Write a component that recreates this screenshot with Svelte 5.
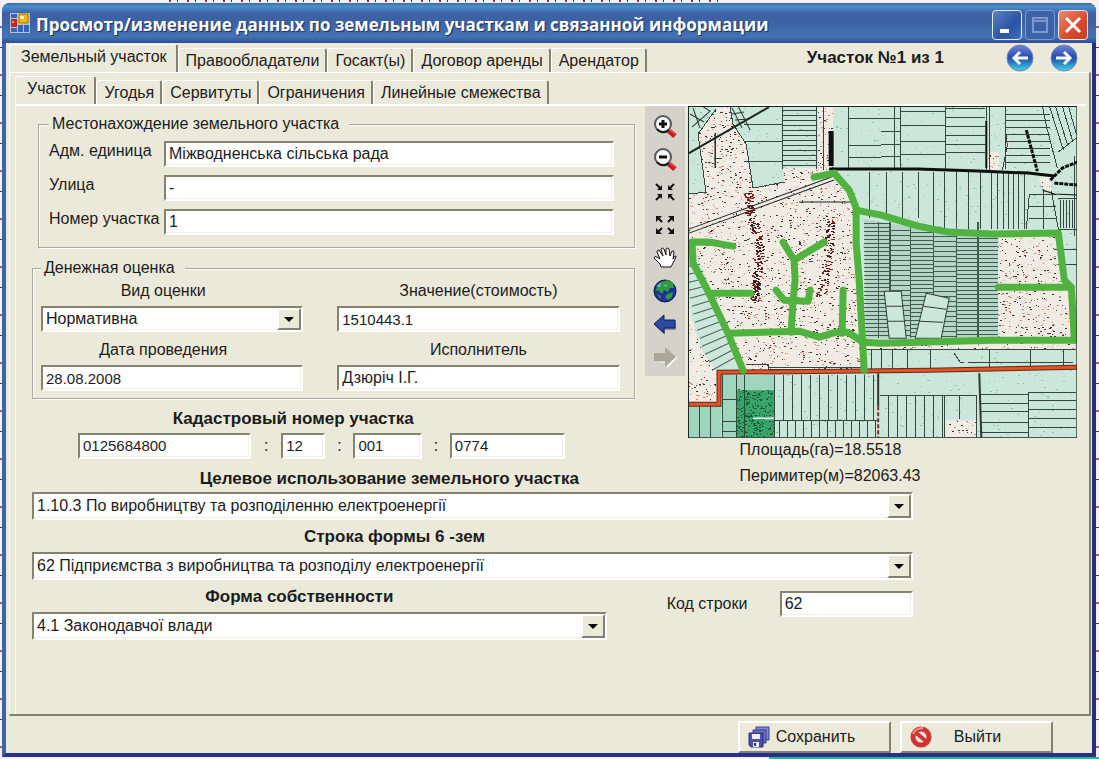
<script lang="ts">
  const mainTabs = ['Земельный участок', 'Правообладатели', 'Госакт(ы)', 'Договор аренды', 'Арендатор'];
  const subTabs = ['Участок', 'Угодья', 'Сервитуты', 'Ограничения', 'Линейные смежества'];

  let mainTab = $state(0);
  let subTab = $state(0);

  let parcel = $state({
    unit: 'Міжводненська сільська рада',
    street: '-',
    number: '1',
    valueKind: 'Нормативна',
    value: '1510443.1',
    date: '28.08.2008',
    author: 'Дзюріч І.Г.',
    cadastre: ['0125684800', '12', '001', '0774'],
    purpose: '1.10.3 По виробництву та розподіленню електроенергії',
    formRow: '62 Підприємства з виробництва та розподілу електроенергії',
    ownership: '4.1 Законодавчої влади',
    rowCode: '62'
  });

  const tools = ['zoom-in', 'zoom-out', 'shrink', 'expand', 'pan', 'globe', 'back', 'forward'];
  const toolNames = ['Приблизить', 'Отдалить', 'Сжать', 'Развернуть', 'Сдвинуть', 'Вся карта', 'Назад', 'Вперёд'];

  // Small seeded generator, so the map is the same on every load
  let seed = 7;
  const rnd = () => {
    seed = (seed * 16807) % 2147483647;
    return seed / 2147483647;
  };

  const specks = (count: number, x: number, y: number, w: number, h: number, len = 1) => {
    let d = '';
    for (let i = 0; i < count; i++) {
      d += `M${Math.floor(x + rnd() * w)} ${Math.floor(y + rnd() * h)}h${1 + Math.floor(rnd() * len)}`;
    }
    return d;
  };

  const streak = (points: number[][], count: number, spread: number) => {
    let d = '';
    for (let i = 0; i < count; i++) {
      const t = rnd() * (points.length - 1);
      const [a, b] = [points[Math.floor(t)], points[Math.floor(t) + 1]];
      const f = t % 1;
      const x = a[0] + (b[0] - a[0]) * f + (rnd() - 0.5) * spread;
      d += `M${Math.round(x)} ${Math.round(a[1] + (b[1] - a[1]) * f)}h2`;
    }
    return d;
  };

  const verticals = (xs: number[], y1: number, y2: number) => xs.map((x) => `M${x} ${y1}V${y2}`).join('');
  const horizontals = (ys: number[], x1: number, x2: number) => ys.map((y) => `M${x1} ${y}H${x2}`).join('');
  const steps = (from: number, to: number, step: number) => {
    const out: number[] = [];
    for (let v = from; v <= to; v += step) out.push(v);
    return out;
  };

  const parcels = [
    verticals([94, 128, 135, 160, 206, 212, 257, 317], 0, 63),
    horizontals([18, 35, 55], 56, 94),
    horizontals(steps(4, 60, 5), 94, 128),
    horizontals([12, 39, 51], 160, 193),
    horizontals([12, 25, 38, 50], 193, 212),
    horizontals([5, 19, 35, 48], 212, 257),
    horizontals([2, 11, 20, 29, 38, 46], 257, 297),
    horizontals([8, 14, 21, 28, 35, 42, 49, 56], 317, 362),
    'M298 0V64M301 0V64M354 0L358 20L369 62M361 0L375 44M367 0L379 38M374 0L384 34M380 0L388 28M388 32L370 46M317 22L319 40L314 64',
    verticals([181, 198, 214, 230], 66, 112),
    verticals([245, 256, 268, 280, 292, 303, 309, 315, 320, 325, 330, 336], 66, 123),
    horizontals([88, 100, 112], 341, 368),
    'M341 88L338 123M355 85V123M363 85L370 123M370 92H389M370 123H389M366 143H389M370 158H389M386 50V130',
    verticals([372, 375, 378, 381, 384], 94, 122),
    'M42 1L45 18L58 38L65 82L96 76M10 28L18 86L0 88M28 3L10 28M27 27V62M26 52H34',
    verticals([183, 193, 204, 219, 242, 301, 342, 375], 243, 263),
    'M178 243H388M266 247L272 256H276M280 256H385M58 258H80V263H178M80 261H176',
    verticals(steps(95, 188, 9), 269, 314),
    verticals(steps(91, 188, 8), 315, 331),
    'M86 314H190M192 289H288M292 288H340M340 286H388',
    verticals(steps(200, 255, 9), 289, 331),
    verticals([271, 340], 289, 313),
    verticals([256, 288], 289, 331),
    horizontals([297, 305, 316, 326], 292, 340),
    horizontals([294, 303, 312, 321], 340, 388),
    verticals([11, 22], 299, 331),
    verticals([34, 48, 56, 86], 269, 331),
    'M34 293H48M34 315H48M34 325H48M340 286V331'
  ].join('');

  const dense = [
    verticals([190, 201, 202, 222, 245, 268, 289, 290], 116, 232),
    horizontals(steps(117, 231, 4), 176, 201),
    horizontals(steps(124, 231, 5), 201, 222),
    horizontals(steps(126, 231, 4), 222, 245),
    horizontals(steps(130, 231, 5), 245, 268),
    horizontals(steps(132, 231, 4), 268, 310)
  ].join('');

  const fans = steps(0, 13, 1)
    .map((i) => `M${Math.round(i * i / 7)} ${160 + i * 8}L${12 + i * 3} ${158 + i * 7}`)
    .join('');

  const speckArea =
    'M28 3L42 0L45 18L58 38L65 82L96 76V62H130V0H145V64L160 86L168 104L176 264H55L4 136V212L14 245L31 266V298H0V88L18 86L10 28Z' +
    'M310 128H371L386 234V243H178V236H310ZM299 46H311V64H299ZM350 72L363 70V84L356 86ZM257 314H288V331H257ZM317 34H321V42H317Z';

  const blackSpecks = specks(3100, 0, 0, 389, 331, 2);
  const redSpecks = specks(2600, 0, 0, 389, 331, 2);
  const paleSpecks = specks(2600, 0, 0, 389, 331, 3);
  const tealSpecks = specks(1100, 0, 0, 389, 331, 2);
  const forestSpecks = specks(260, 48, 283, 38, 48, 2);
  const redStreaks =
    streak([[60, 85], [62, 108], [72, 140], [68, 175], [66, 196]], 170, 9) +
    streak([[142, 110], [140, 150], [132, 190]], 80, 10);
  const blackStreaks =
    streak([[60, 85], [62, 108], [72, 140], [68, 175], [66, 196]], 120, 7) +
    streak([[142, 110], [140, 150], [132, 190]], 50, 8);
</script>

{#snippet combo(id: string, key: 'valueKind' | 'purpose' | 'formRow' | 'ownership')}
  <div class="combo">
    <select {id} bind:value={parcel[key]}>
      <option>{parcel[key]}</option>
    </select>
    <span class="drop" aria-hidden="true">
      <svg viewBox="0 0 10 5"><path d="M0 0H10L5 5Z" /></svg>
    </span>
  </div>
{/snippet}

<div class="desktop">
  <div class="window">
    <header class="titlebar">
      <svg class="app-icon" viewBox="0 0 20 20" aria-hidden="true">
        <path fill="#b8c4d0" d="M0 0H20V20H0Z" />
        <path fill="#3566b8" d="M1 1H7V5H1ZM8 12H13V19H8ZM14 12H19V19H14ZM1 15H7V19H1Z" />
        <path fill="#c8281c" d="M1 6H7V14H1Z" />
        <path fill="#f09080" d="M2 8H4V10H2Z" />
        <path fill="#f0b818" stroke="#a87808" d="M9 1H18V10H9Z" />
        <path fill="#fff0a0" d="M10 3H14V6H10Z" />
      </svg>
      <h1>Просмотр/изменение данных по земельным участкам и связанной информации</h1>
      <div class="window-buttons">
        <button type="button" aria-label="Свернуть">
          <svg viewBox="0 0 24 24"><path fill="#fff" d="M5 16H14V20H5Z" /></svg>
        </button>
        <button type="button" class="dim" aria-label="Развернуть" disabled>
          <svg viewBox="0 0 24 24"><path fill="none" stroke="#8096cf" stroke-width="2" d="M5 5H19V19H5ZM5 8H19" /></svg>
        </button>
        <button type="button" class="close" aria-label="Закрыть">
          <svg viewBox="0 0 24 24"><path stroke="#fff" stroke-width="3" d="M5 5L19 19M19 5L5 19" /></svg>
        </button>
      </div>
    </header>

    <main class="client">
      <div class="tab-row">
        <div class="tabs main-tabs" role="tablist">
          {#each mainTabs as name, i (name)}
            <button
              type="button"
              role="tab"
              aria-selected={mainTab === i}
              class:active={mainTab === i}
              onclick={() => (mainTab = i)}
            >
              {name}
            </button>
          {/each}
        </div>
        <div class="pager">
          <strong>Участок №1 из 1</strong>
          <button type="button" aria-label="Предыдущий участок">
            <svg viewBox="0 0 28 28">
              <defs>
                <linearGradient id="ball" x2="0" y2="1">
                  <stop offset="0" stop-color="#6f86d8" />
                  <stop offset="0.45" stop-color="#2b4db0" />
                  <stop offset="0.6" stop-color="#2468b8" />
                  <stop offset="1" stop-color="#40d8e8" />
                </linearGradient>
              </defs>
              <circle cx="14" cy="14" r="13" fill="url(#ball)" stroke="#6f8ab8" />
              <path fill="none" stroke="#f4f8ff" stroke-width="3" d="M22 14H8M14 8L8 14L14 20" />
            </svg>
          </button>
          <button type="button" aria-label="Следующий участок">
            <svg viewBox="0 0 28 28">
              <circle cx="14" cy="14" r="13" fill="url(#ball)" stroke="#6f8ab8" />
              <path fill="none" stroke="#f4f8ff" stroke-width="3" d="M6 14H20M14 8L20 14L14 20" />
            </svg>
          </button>
        </div>
      </div>

      <div class="page">
        <div class="tabs sub-tabs" role="tablist">
          {#each subTabs as name, i (name)}
            <button
              type="button"
              role="tab"
              aria-selected={subTab === i}
              class:active={subTab === i}
              onclick={() => (subTab = i)}
            >
              {name}
            </button>
          {/each}
        </div>

        <div class="subpage">
          <div class="upper">
            <div class="details">
              <fieldset class="place">
                <legend>Местонахождение земельного участка</legend>
                <div class="place-row">
                  <label for="unit">Адм. единица</label>
                  <input id="unit" bind:value={parcel.unit} />
                </div>
                <div class="place-row">
                  <label for="street">Улица</label>
                  <input id="street" bind:value={parcel.street} />
                </div>
                <div class="place-row">
                  <label for="number">Номер участка</label>
                  <input id="number" bind:value={parcel.number} />
                </div>
              </fieldset>

              <fieldset class="money">
                <legend>Денежная оценка</legend>
                <div class="money-grid">
                  <div class="stacked left">
                    <label for="kind">Вид оценки</label>
                    {@render combo('kind', 'valueKind')}
                  </div>
                  <div class="stacked">
                    <label for="value">Значение(стоимость)</label>
                    <input id="value" class="num" bind:value={parcel.value} />
                  </div>
                  <div class="stacked left">
                    <label for="date">Дата проведения</label>
                    <input id="date" class="num" bind:value={parcel.date} />
                  </div>
                  <div class="stacked">
                    <label for="author">Исполнитель</label>
                    <input id="author" bind:value={parcel.author} />
                  </div>
                </div>
              </fieldset>

              <div class="cadastre">
                <h2>Кадастровый номер участка</h2>
                <div class="cadastre-row">
                  {#each parcel.cadastre as _, i}
                    {#if i > 0}<span>:</span>{/if}
                    <input
                      class="num"
                      aria-label="Кадастровый номер, часть {i + 1}"
                      bind:value={parcel.cadastre[i]}
                    />
                  {/each}
                </div>
              </div>

              <h2 class="purpose"><label for="purpose">Целевое использование земельного участка</label></h2>
            </div>

            <div class="toolbar" role="toolbar" aria-label="Карта">
              {#each tools as tool, i (tool)}
                <button type="button" aria-label={toolNames[i]} disabled={tool === 'forward'}>
                  <svg viewBox="0 0 24 24">
                    {#if tool === 'zoom-in' || tool === 'zoom-out'}
                      <path stroke="#d01818" stroke-width="5" d="M16 17L22 22" />
                      <path stroke="#f07878" stroke-width="1" d="M17 16L22 20" />
                      <circle cx="10" cy="10" r="8" fill="#f8f8f8" stroke="#55585e" stroke-width="2" />
                      <path fill="none" stroke="#15181c" stroke-width="2" d="M4 15A8 8 0 0 0 16 16" />
                      <path stroke="#111" stroke-width="3" d="M6 10H14" />
                      {#if tool === 'zoom-in'}<path stroke="#111" stroke-width="3" d="M10 6V14" />{/if}
                    {:else if tool === 'shrink'}
                      <path fill="none" stroke="#111" stroke-width="2" d="M3 4L8 9M21 4L16 9M3 20L8 15M21 20L16 15" />
                      <path fill="#111" d="M9 5V10H4ZM15 5V10H20ZM9 19V14H4ZM15 19V14H20Z" />
                    {:else if tool === 'expand'}
                      <path fill="none" stroke="#111" stroke-width="2" d="M5 5L9 9M19 5L15 9M5 19L9 15M19 19L15 15" />
                      <path fill="#111" d="M3 3H9L3 9ZM21 3H15L21 9ZM3 21H9L3 15ZM21 21H15L21 15Z" />
                    {:else if tool === 'pan'}
                      <path
                        fill="#fff"
                        stroke="#111"
                        stroke-width="1"
                        d="M8 21L7 18L1 12Q1 10 4 11L7 13L4 6Q4 4 6 4L10 10L8 3Q9 1 11 3L13 9V3Q15 1 16 3L17 10L19 5Q21 4 21 7L20 13Q23 8 23 11L20 17L18 21Z"
                      />
                    {:else if tool === 'globe'}
                      <circle cx="12" cy="12" r="11" fill="#1f2f9c" stroke="#101840" />
                      <path fill="#2e9c3c" d="M8 3L15 1L20 4L21 9L17 9L15 13L11 11L9 15L5 11L3 12L4 6ZM14 15L20 13L19 18L15 21L12 18ZM4 15L8 17L7 20Z" />
                      <path fill="#7fb4e8" d="M4 7L8 4L7 8ZM11 6L14 5L13 8Z" />
                    {:else if tool === 'back'}
                      <path fill="#8a8a90" d="M2 14L12 23V18H23V10H14Z" />
                      <path fill="#2a4aa8" stroke="#101c58" d="M1 12L11 3V8H22V16H11V21Z" />
                    {:else}
                      <path fill="#fff" d="M3 18H14V23L24 13L23 11L14 17Z" />
                      <path fill="#aca899" d="M1 8H12V2L23 12L12 22V16H1Z" />
                    {/if}
                  </svg>
                </button>
              {/each}
            </div>

            <div class="map-column">
              <svg class="map" viewBox="0 0 389 332" role="img" aria-label="Карта участка">
                <defs>
                  <clipPath id="dots"><path d={speckArea} /></clipPath>
                </defs>
                <path fill="#cbe6da" d="M0 0H389V332H0Z" />
                <path class="speck" stroke="#8fc4b4" d={tealSpecks} />
                <path fill="#b4d4c8" d="M176 113L230 122L310 130V232H178Z" />
                <path fill="#9fd4bd" d="M0 299H33V331H0ZM35 269H86V331H35Z" />
                <path fill="#38a468" d="M48 284H86V331H48Z" />
                <path class="speck" stroke="#125c38" d={forestSpecks} />
                <path stroke="#d4f0e0" stroke-width="2" d="M65 312H86" />
                <path fill="#f0ebe3" d={speckArea} />
                <g clip-path="url(#dots)">
                  <path class="speck" stroke="#d8dce0" d={paleSpecks} />
                  <path class="speck" stroke="#cc8874" d={redSpecks} />
                  <path class="speck" stroke="#42302f" d={blackSpecks} />
                  <path class="speck" stroke="#8a2426" d={redStreaks} />
                  <path class="speck" stroke="#2c1c20" d={blackStreaks} />
                </g>
                <path class="line" stroke="#354641" d={parcels} />
                <path class="line" stroke="#405b52" d={dense} />
                <path fill="#cbe6da" d="M4 144L55 264L30 263L18 250L3 210L0 190V150Z" />
                <path fill="none" stroke="#4c625a" d={fans} />
                <path fill="#cbe6da" stroke="#304039" d="M196 185H213L218 232H201ZM238 187L261 192L253 232H227Z" />
                <path fill="none" stroke="#304039" d="M198 200H215M199 215H217M235 200L258 203M231 215L255 216" />
                <path fill="none" stroke="#1c2220" stroke-width="2" d="M1 47L81 1" />
                <path fill="none" stroke="#2c3a36" d="M4 21L22 5L14 0M2 8L16 16M5 2L12 22M44 2L54 22M50 0L62 24M44 8L56 6M47 14L60 13" />
                <path fill="none" stroke="#1c2220" d="M1 123L146 70M1 127L146 74M111 96H163M27 27V62" />
                <path fill="none" stroke="#0c100e" stroke-width="5" d="M143 25V60" />
                <path fill="none" stroke="#0c100e" stroke-width="3" d="M141 63H230L290 65L340 67L366 70" />
                <path fill="none" stroke="#0c100e" stroke-width="3" stroke-dasharray="4 1" d="M338 24L349 65M362 74L374 62L389 56M366 77L389 79" />
                <path fill="none" stroke="#0c100e" stroke-width="2" d="M298 15V62" />
                <path fill="none" stroke="#0c100e" d="M354 84L366 88L389 89" />
                <path fill="none" stroke="#303836" stroke-width="2" d="M291 267L293 331M190 267V300" />
                <path fill="none" stroke="#862a30" stroke-width="2" stroke-dasharray="4 2" d="M190 300V331" />
                <path fill="none" stroke="#5c2c1c" stroke-width="5" d="M0 298H31V266L150 265L240 264L389 261" />
                <path fill="none" stroke="#e25424" stroke-width="3" d="M0 298H31V266L150 265L240 264L389 261" />
                <g class="boundary">
                  <path d="M45 140L21 136H4L5 157L21 187L40 227L55 264M21 187H63" />
                  <path d="M95 136L106 154L136 136M106 154L107 174L105 194L103 226" />
                  <path d="M88 184L96 194L120 195L122 184M155 184L154 227" />
                  <path d="M40 227L111 225L131 231L148 226H160L175 236L193 237L303 234H387" />
                  <path d="M126 71L146 67L161 84L168 102V137L171 174L176 264" />
                  <path d="M168 104L193 109L230 120L260 126L303 128L370 127L376 174L383 181L386 234M310 181H383" />
                </g>
                <path fill="none" stroke="#1c2420" stroke-width="2" d="M0 0H389V332H0Z" />
              </svg>
              <p>Площадь(га)=18.5518</p>
              <p>Перимитер(м)=82063.43</p>
            </div>
          </div>

          <div class="lower">
            {@render combo('purpose', 'purpose')}
            <div class="wide">
              <h2><label for="form-row">Строка формы 6 -зем</label></h2>
              {@render combo('form-row', 'formRow')}
            </div>
            <div class="last">
              <div class="ownership">
                <h2><label for="ownership">Форма собственности</label></h2>
                {@render combo('ownership', 'ownership')}
              </div>
              <div class="code">
                <label for="row-code">Код строки</label>
                <input id="row-code" bind:value={parcel.rowCode} />
              </div>
            </div>
          </div>
        </div>
      </div>

      <footer>
        <button type="button">
          <svg viewBox="0 0 22 22" aria-hidden="true">
            <path fill="#8488cc" stroke="#3c4090" d="M8 1H21V14H8Z" />
            <path fill="#6c72c0" stroke="#343a8c" d="M5 4H18V17H5Z" />
            <path fill="#4a52ac" stroke="#282e80" d="M1 7H15V21H3L1 19Z" />
            <path fill="#eceefa" d="M4 8H12V13H4ZM5 16H11V21H5Z" />
            <path fill="#282e80" d="M6 17H8V20H6Z" />
          </svg>
          <span>Сохранить</span>
        </button>
        <button type="button">
          <svg viewBox="0 0 22 22" aria-hidden="true">
            <circle cx="11" cy="11" r="8" fill="#f4e4dc" stroke="#d03434" stroke-width="5" />
            <path stroke="#d03434" stroke-width="4" d="M5 6L17 16" />
            <path fill="none" stroke="#ec9a94" stroke-width="2" d="M3 8Q6 2 13 2" />
          </svg>
          <span>Выйти</span>
        </button>
      </footer>
    </main>
  </div>
</div>

<style>
  :global(body) {
    margin: 0;
  }

  .desktop {
    --face: #ebe9d9;
    --shade: #aca899;
    --dark: #85826f;
    box-sizing: border-box;
    min-height: 100vh;
    display: flex;
    padding: 3px 3px 2px 2px;
    background:
      repeating-linear-gradient(90deg, transparent 0 9px, #803040 9px 11px, transparent 11px 17px, #303840 17px 18px) 160px 0 / 560px 2px no-repeat,
      linear-gradient(90deg, transparent 70%, #3fae8c 70%) bottom / 100% 2px no-repeat,
      repeating-linear-gradient(#f4f0f4 0 26px, #a06070 26px 28px, #f4f0f4 28px 47px, #404050 47px 48px);
    font-family: 'Liberation Sans', Arial, sans-serif;
    font-size: 16px;
    line-height: 20px;
    color: #1c1c1c;
  }

  .window {
    flex: 1;
    min-width: 0;
    display: flex;
    flex-direction: column;
    border: 4px solid #3d64a8;
    border-top: 0;
    border-right-color: #27307f;
    border-bottom-color: #27308a;
    border-radius: 8px 8px 0 0;
    background: #3d64a8;
  }

  .titlebar {
    display: flex;
    align-items: center;
    gap: 6px;
    height: 40px;
    margin: 0 -4px;
    padding: 0 8px;
    border-radius: 8px 8px 0 0;
    background: linear-gradient(#3566a8 0, #4a90cc 8%, #3c62a4 26%, #3c62a4 50%, #4474b4 85%, #2c4c98 100%);
  }

  .app-icon {
    width: 20px;
    height: 20px;
    flex: none;
  }

  h1 {
    flex: 1;
    margin: 0;
    padding-top: 4px;
    font-family: 'Open Sans', 'Noto Sans', sans-serif;
    font-size: 17px;
    font-weight: 700;
    white-space: nowrap;
    color: #fff;
    text-shadow: 1px 1px 1px #1a2a60;
  }

  .window-buttons {
    display: flex;
    gap: 3px;
    padding-top: 4px;
  }

  .window-buttons button {
    width: 30px;
    height: 30px;
    padding: 2px;
    border: 1px solid #e4ecfa;
    border-radius: 4px;
    background: linear-gradient(135deg, #5c80c4, #2c52a4 60%, #3c74b8);
  }

  .window-buttons .dim {
    border-color: #7c98cc;
    background: #3c62a8;
  }

  .window-buttons .close {
    background: linear-gradient(135deg, #ec8a70, #d84a2c 60%, #c83c20);
  }

  .window-buttons svg {
    display: block;
    width: 24px;
    height: 24px;
  }

  .client {
    flex: 1;
    display: flex;
    flex-direction: column;
    padding: 1px 1px 0 3px;
    background: var(--face);
  }

  .tab-row {
    display: flex;
    justify-content: space-between;
    align-items: flex-start;
  }

  .tabs {
    display: flex;
    align-items: flex-end;
  }

  .tabs button {
    height: 24px;
    padding: 0 6px 0 7px;
    border: 0;
    border-top: 1px solid #fff;
    border-left: 1px solid #fff;
    border-right: 2px solid var(--dark);
    border-radius: 3px 3px 0 0;
    background: var(--face);
    font: inherit;
    color: inherit;
    white-space: nowrap;
  }

  .tabs .active {
    height: 28px;
    padding: 0 9px 4px 11px;
  }

  .pager {
    display: flex;
    align-items: center;
    gap: 16px;
    padding-right: 13px;
  }

  .pager strong {
    margin-right: 46px;
    font-size: 17px;
  }

  .pager button {
    width: 28px;
    height: 28px;
    padding: 0;
    border: 0;
    background: none;
  }

  .pager svg {
    display: block;
  }

  .page {
    flex: 1;
    display: flex;
    flex-direction: column;
    padding: 3px 4px 0 5px;
    border: 1px solid #fff;
    border-right: 2px solid var(--dark);
    border-bottom: 2px solid var(--dark);
  }

  .subpage {
    flex: 1;
    padding: 0 8px 0 16px;
    border-top: 2px solid #fff;
    border-left: 1px solid #fff;
  }

  .upper {
    display: grid;
    grid-template-columns: minmax(0, 609fr) 40px minmax(0, 389fr);
    column-gap: 3px;
    align-items: start;
  }

  .details {
    display: flex;
    flex-direction: column;
    gap: 10px;
    padding: 8px 7px 0 0;
  }

  fieldset {
    min-width: 0;
    margin: 0;
    border: 1px solid var(--shade);
    box-shadow: 1px 1px 0 #fff, inset 1px 1px 0 #fff;
  }

  legend {
    padding: 0 10px 0 3px;
    background: var(--face);
  }

  .place {
    display: flex;
    flex-direction: column;
    gap: 8px;
    margin-left: 6px;
    padding: 7px 20px 12px 10px;
  }

  .place-row {
    display: grid;
    grid-template-columns: 115px minmax(0, 1fr);
  }

  .place-row label {
    white-space: nowrap;
  }

  input,
  select {
    box-sizing: border-box;
    width: 100%;
    height: 26px;
    margin: 0;
    padding: 0 3px;
    border: 2px solid;
    border-color: var(--dark) #fff #fff var(--dark);
    border-radius: 0;
    background: #fff;
    box-shadow: inset -1px -1px 0 #f1efe2;
    font: inherit;
    color: inherit;
    appearance: none;
  }

  .num {
    font-size: 15px;
  }

  .money {
    padding: 3px 14px 7px 8px;
  }

  .money-grid {
    display: grid;
    grid-template-columns: minmax(0, 262fr) minmax(0, 282fr);
    gap: 8px 34px;
  }

  .stacked {
    display: flex;
    flex-direction: column;
    gap: 5px;
    text-align: center;
  }

  .stacked.left label {
    padding-right: 18px;
  }

  .combo {
    position: relative;
    display: flex;
    text-align: left;
  }

  .drop {
    position: absolute;
    top: 2px;
    right: 2px;
    bottom: 2px;
    width: 24px;
    box-sizing: border-box;
    display: flex;
    align-items: center;
    justify-content: center;
    border: 2px solid;
    border-color: #fff var(--dark) var(--dark) #fff;
    background: var(--face);
    pointer-events: none;
  }

  .drop svg {
    width: 10px;
    height: 5px;
  }

  h2 {
    margin: 0;
    font-size: 17px;
    font-weight: 700;
    text-align: center;
    white-space: nowrap;
  }

  .cadastre {
    display: flex;
    flex-direction: column;
    gap: 4px;
    padding: 0 70px 0 46px;
  }

  .cadastre h2 {
    padding-right: 56px;
  }

  .cadastre-row {
    display: grid;
    grid-template-columns: 172fr 30px 44fr 28px 68fr 28px 114fr;
    text-align: center;
    line-height: 26px;
  }

  .purpose {
    padding-left: 112px;
  }

  .toolbar {
    display: flex;
    flex-direction: column;
    padding: 3px 0;
    background: #d5d2ca;
  }

  .toolbar button {
    height: 33px;
    padding: 4px 8px;
    border: 0;
    background: none;
  }

  .toolbar svg {
    display: block;
    width: 24px;
    height: 24px;
  }

  .map {
    display: block;
    width: 100%;
    margin-bottom: 2px;
  }

  .speck,
  .line {
    fill: none;
    shape-rendering: crispEdges;
  }

  .boundary path {
    fill: none;
    stroke: #50b33f;
    stroke-width: 7;
    stroke-linecap: round;
    stroke-linejoin: round;
  }

  .map-column p {
    margin: 0;
    padding-left: 52px;
    white-space: nowrap;
  }

  .map-column p + p {
    margin-top: 6px;
  }

  .lower {
    display: flex;
    flex-direction: column;
    gap: 7px;
    padding: 3px 164px 40px 0;
  }

  .lower select {
    height: 28px;
  }

  .wide,
  .ownership {
    display: flex;
    flex-direction: column;
    gap: 5px;
  }

  .wide h2 {
    padding-right: 156px;
  }

  .last {
    display: grid;
    grid-template-columns: minmax(0, 574fr) minmax(0, 246fr);
    gap: 60px;
    align-items: start;
  }

  .ownership h2 {
    padding-right: 40px;
  }

  .code {
    display: grid;
    grid-template-columns: 113px minmax(0, 1fr);
    align-items: center;
    padding-top: 4px;
  }

  footer {
    display: flex;
    justify-content: flex-end;
    gap: 9px;
    padding: 5px 38px 0 0;
  }

  footer button {
    width: 153px;
    height: 32px;
    display: flex;
    align-items: center;
    padding: 0 8px;
    border: 2px solid;
    border-color: #fff var(--dark) var(--dark) #fff;
    background: var(--face);
    font: inherit;
    color: inherit;
  }

  footer svg {
    width: 22px;
    height: 22px;
  }

  footer span {
    flex: 1;
    padding-right: 20px;
  }
</style>
